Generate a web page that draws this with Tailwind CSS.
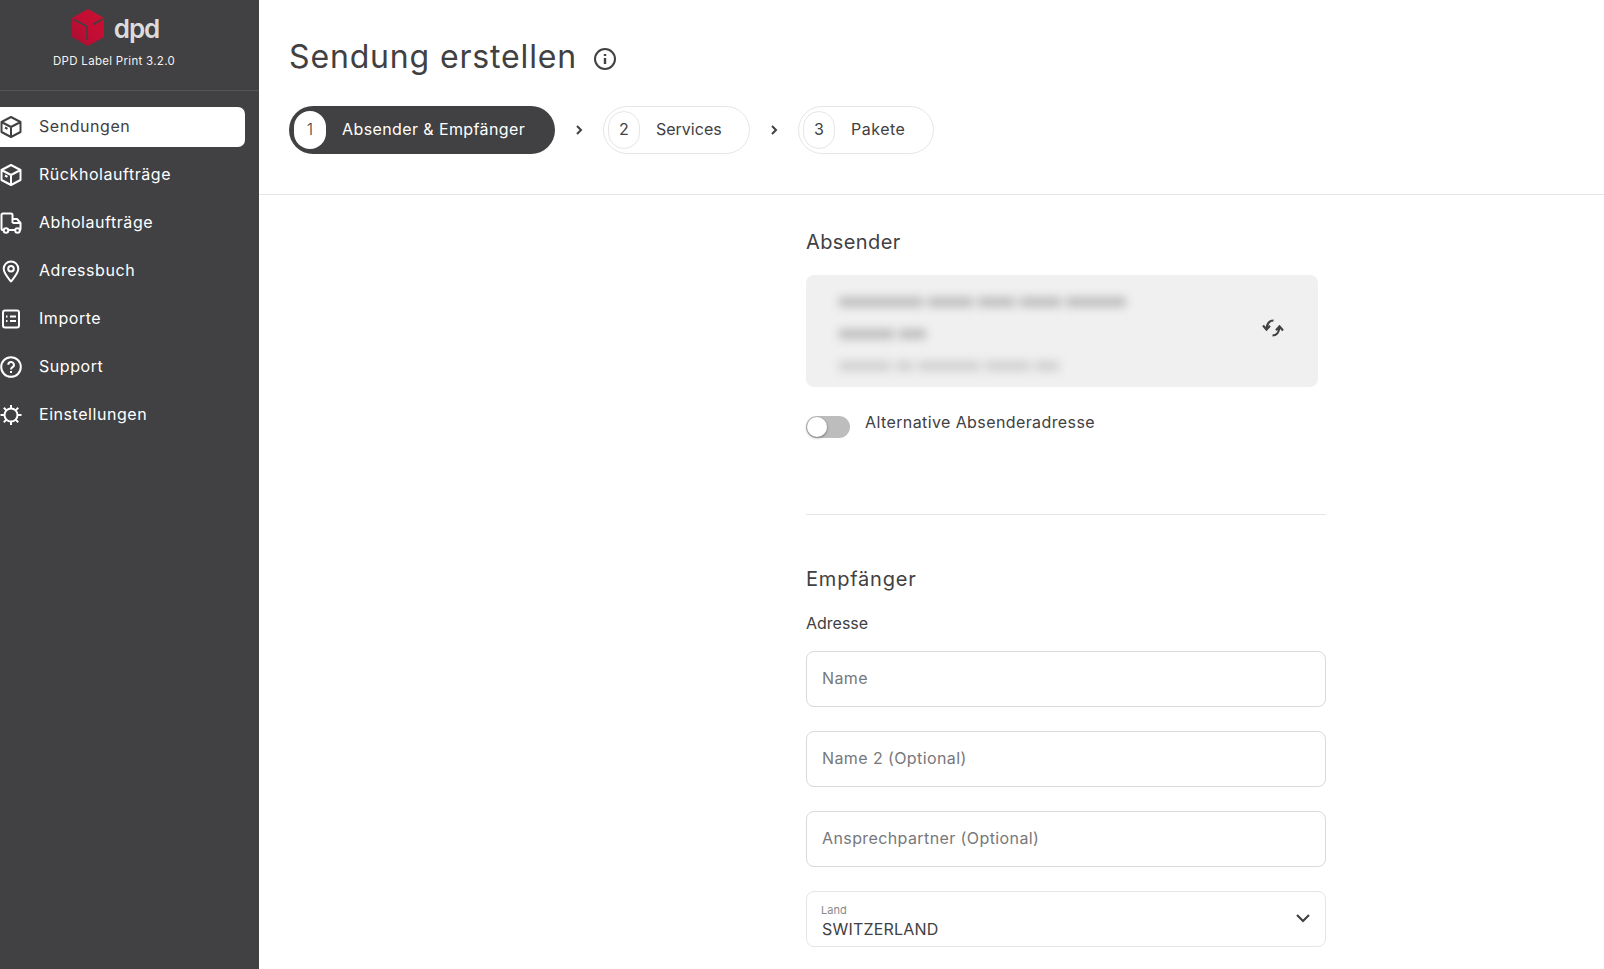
<!DOCTYPE html>
<html lang="de">
<head>
  <meta charset="UTF-8" />
  <title>Sendung erstellen</title>
  <script src="https://cdn.jsdelivr.net/npm/@tailwindcss/browser@4"></script>
</head>
<body class="h-screen overflow-hidden bg-white text-[#414042] font-['Inter',sans-serif]">
  <div class="flex h-full">
    <!-- Sidebar -->
    <aside class="w-[259px] shrink-0 bg-[#414042] text-white">
      <div class="h-[91px] border-b border-[#555456] flex flex-col items-center pr-[31px]">
        <div class="flex items-center gap-[10px] mt-[9px] h-[37px] ml-[3px]">
          <svg class="w-[32px] h-[37px]" viewBox="0 0 32 37">
            <defs>
              <linearGradient id="cube" x1="0" y1="1" x2="1" y2="0">
                <stop offset="0" stop-color="#a50f30" />
                <stop offset="0.5" stop-color="#c40d35" />
                <stop offset="1" stop-color="#c8102e" />
              </linearGradient>
            </defs>
            <path d="M16 0 L32 9 V28 L16 37 L0 28 V9 Z" fill="url(#cube)" />
            <path d="M1 10 L15 17.5 V31 M31 10 L21 15.5" fill="none" stroke="#414042" stroke-width="1.6" />
          </svg>
          <span class="text-[26px] leading-none font-semibold text-[#dcdcdc] tracking-[-1px] mt-[2px]">dpd</span>
        </div>
        <p class="text-[11.5px] leading-[16px] mt-[7px] tracking-[0.3px] text-[#f2f2f2]">DPD Label Print 3.2.0</p>
      </div>
      <nav class="flex flex-col gap-2 pt-4 pr-[14px] text-[16px] tracking-[0.55px]">
        <a class="flex items-center h-10 gap-[17px] bg-white text-[#414042] rounded-r-[7px]">
          <svg class="w-[22px] h-[24px]" viewBox="0 0 22 24" fill="none" stroke="currentColor" stroke-width="2" stroke-linejoin="round"><path d="M11 2 L20.500 7 V17 L11 22 L1.500 17 V7 Z M1.500 7 L11 12 L20.500 7 M11 12 V22" /><path d="M5 12.500 L7.500 13.800" /></svg>
          <span class="mb-[2px]">Sendungen</span>
        </a>
        <a class="flex items-center h-10 gap-[17px]">
          <svg class="w-[22px] h-[24px]" viewBox="0 0 22 24" fill="none" stroke="currentColor" stroke-width="2" stroke-linejoin="round"><path d="M11 2 L20.500 7 V17 L11 22 L1.500 17 V7 Z M1.500 7 L11 12 L20.500 7 M11 12 V22" /><path d="M5 12.500 L7.500 13.800" /></svg>
          <span class="mb-[2px]">Rückholaufträge</span>
        </a>
        <a class="flex items-center h-10 gap-[17px]">
          <svg class="w-[22px] h-[24px]" viewBox="0 0 22 24" fill="none" stroke="currentColor" stroke-width="2" stroke-linejoin="round"><path d="M3.500 19 H2.500 Q1.500 19 1.500 18 V4 Q1.500 2.500 3 2.500 H11 Q12.500 2.500 12.500 4 V12 M12.500 8 H17 L20.500 12 V18 Q20.500 19 19.800 19 M15 19 H8.500 M12.500 12 H20.500" /><circle cx="6" cy="19.500" r="2.300" /><circle cx="17.500" cy="19.500" r="2.300" /></svg>
          <span class="mb-[2px]">Abholaufträge</span>
        </a>
        <a class="flex items-center h-10 gap-[17px]">
          <svg class="w-[22px] h-[24px]" viewBox="0 0 22 24" fill="none" stroke="currentColor" stroke-width="2" stroke-linejoin="round"><path d="M11 22.500 C7 17.500 3.700 14 3.700 9.800 A7.300 7.300 0 0 1 18.300 9.800 C18.300 14 15 17.500 11 22.500 Z" /><circle cx="11" cy="9.800" r="2.800" /></svg>
          <span class="mb-[2px]">Adressbuch</span>
        </a>
        <a class="flex items-center h-10 gap-[17px]">
          <svg class="w-[22px] h-[24px]" viewBox="0 0 22 24" fill="none" stroke="currentColor" stroke-width="2" stroke-linejoin="round"><rect x="3" y="3.500" width="16" height="17" rx="2" /><path d="M10 9.500 H16 M10 14 H16 M6 9.500 H7.500 M6 14 H7.500" /></svg>
          <span class="mb-[2px]">Importe</span>
        </a>
        <a class="flex items-center h-10 gap-[17px]">
          <svg class="w-[22px] h-[24px]" viewBox="0 0 22 24" fill="none" stroke="currentColor" stroke-width="2"><circle cx="11" cy="12" r="9.800" /><path d="M8.300 9.800 A2.800 2.800 0 1 1 12.500 12.200 C11.400 12.900 11 13.400 11 14.600" /><path d="M11 16 V18" /></svg>
          <span class="mb-[2px]">Support</span>
        </a>
        <a class="flex items-center h-10 gap-[17px]">
          <svg class="w-[22px] h-[24px]" viewBox="0 0 22 24" fill="none" stroke="currentColor" stroke-width="2"><circle cx="11" cy="12" r="6.500" /><path d="M11 2 V5.500 M11 18.500 V22 M0.500 12 H4.500 M17.500 12 H21.500 M3.800 4.800 L6.400 7.400 M15.600 16.600 L18.200 19.200 M18.200 4.800 L15.600 7.400 M6.400 16.600 L3.800 19.200" /></svg>
          <span class="mb-[2px]">Einstellungen</span>
        </a>
      </nav>
    </aside>

    <main class="flex-1 min-w-0">
      <!-- Header -->
      <header class="h-[195px] border-b border-[#e6e6e6] pl-[30px] pt-[35px]">
        <div class="flex items-center gap-[16px] h-[46px]">
          <h1 class="text-[32px] leading-none font-normal tracking-[0.85px] mb-[2px]">Sendung erstellen</h1>
          <svg class="w-[24px] h-[24px] mt-[1px]" viewBox="0 0 24 24" fill="none" stroke="currentColor" stroke-width="2"><circle cx="12" cy="12" r="10" /><path d="M12 11 V17" stroke-width="2.400" /><path d="M12 7 V9" stroke-width="2.400" /></svg>
        </div>
        <ol class="flex items-center mt-[25px] text-[16px]">
          <li class="flex items-center h-12 w-[266px] rounded-full bg-[#414042] text-white pl-[5px]">
            <span class="flex items-center justify-center w-[32px] h-[38px] rounded-full bg-white text-[#414042] font-light pb-[2px]">1</span>
            <span class="ml-[16px] mb-[2px] tracking-[0.4px]">Absender &amp; Empfänger</span>
          </li>
          <li class="flex justify-center w-[48px]">
            <svg class="w-[10px] h-[12px]" viewBox="0 0 10 12" fill="none" stroke="currentColor" stroke-width="2"><path d="M3 2 L7 6 L3 10" /></svg>
          </li>
          <li class="flex items-center h-12 w-[147px] rounded-full border border-[#e6e6e6] pl-[4px]">
            <span class="flex items-center justify-center w-[32px] h-[38px] rounded-full border border-[#e6e6e6] pb-[2px]">2</span>
            <span class="ml-[16px] mb-[2px]">Services</span>
          </li>
          <li class="flex justify-center w-[48px]">
            <svg class="w-[10px] h-[12px]" viewBox="0 0 10 12" fill="none" stroke="currentColor" stroke-width="2"><path d="M3 2 L7 6 L3 10" /></svg>
          </li>
          <li class="flex items-center h-12 w-[136px] rounded-full border border-[#e6e6e6] pl-[4px]">
            <span class="flex items-center justify-center w-[32px] h-[38px] rounded-full border border-[#e6e6e6] pb-[2px]">3</span>
            <span class="ml-[16px] mb-[2px] tracking-[0.5px]">Pakete</span>
          </li>
        </ol>
      </header>

      <!-- Form -->
      <section class="w-[520px] ml-[547px]">
        <h2 class="text-[20px] leading-[28px] mt-[33px] tracking-[0.4px]">Absender</h2>
        <div class="flex items-center justify-between h-[112px] w-[512px] mt-[19px] rounded-[8px] bg-[#f0f0f0] pl-[33px] pr-[33px]">
          <div class="flex flex-col gap-[22px] mt-[6px] blur-[5px]">
            <div class="flex gap-[5px]"><i class="w-[84px] h-[10px] bg-[#bdbdbd]"></i><i class="w-[45px] h-[10px] bg-[#bdbdbd]"></i><i class="w-[37px] h-[10px] bg-[#bdbdbd]"></i><i class="w-[41px] h-[10px] bg-[#bdbdbd]"></i><i class="w-[60px] h-[10px] bg-[#bdbdbd]"></i></div>
            <div class="flex gap-[5px]"><i class="w-[55px] h-[10px] bg-[#bdbdbd]"></i><i class="w-[27px] h-[10px] bg-[#bdbdbd]"></i></div>
            <div class="flex gap-[5px]"><i class="w-[52px] h-[10px] bg-[#d0d0d0]"></i><i class="w-[17px] h-[10px] bg-[#d0d0d0]"></i><i class="w-[62px] h-[10px] bg-[#d0d0d0]"></i><i class="w-[45px] h-[10px] bg-[#d0d0d0]"></i><i class="w-[24px] h-[10px] bg-[#d0d0d0]"></i></div>
          </div>
          <svg class="w-[24px] h-[24px] mb-[6px]" viewBox="0 0 24 24" fill="none" stroke="#414042" stroke-width="2.200"><path d="M12.500 4.500 C8.500 4.500 6.200 6.800 5.600 12.500" /><path d="M2 9.500 L5.500 13.500 L9 9.800" /><path d="M11.500 19.500 C15.500 19.500 17.800 17.200 18.400 11.500" /><path d="M15 14.200 L18.500 10.500 L22 14.500" /></svg>
        </div>
        <div class="flex items-start mt-[29px]">
          <span class="relative block w-[44px] h-[22px] rounded-full bg-[#bdbdbd]">
            <span class="absolute left-[1px] top-[1px] w-[20px] h-[20px] rounded-full bg-white shadow-[0_1px_3px_rgba(0,0,0,0.4)]"></span>
          </span>
          <label class="ml-[15px] mt-[-2px] text-[16px] leading-[16px] tracking-[0.4px]">Alternative Absenderadresse</label>
        </div>
        <hr class="border-[#e6e6e6] mt-[76px]" />
        <h2 class="text-[20px] leading-[28px] mt-[50px] tracking-[0.8px]">Empfänger</h2>
        <p class="text-[16px] leading-[24px] mt-[18px]">Adresse</p>
        <div class="flex flex-col gap-[24px] mt-[16px]">
          <input class="h-[56px] w-full rounded-[8px] border border-[#d9d9d9] pl-[15px] pr-4 pb-[2px] text-[16px] tracking-[0.4px] placeholder:text-[#77787b] outline-none" placeholder="Name" />
          <input class="h-[56px] w-full rounded-[8px] border border-[#d9d9d9] pl-[15px] pr-4 pb-[2px] text-[16px] tracking-[0.4px] placeholder:text-[#77787b] outline-none" placeholder="Name 2 (Optional)" />
          <input class="h-[56px] w-full rounded-[8px] border border-[#d9d9d9] pl-[15px] pr-4 pb-[2px] text-[16px] tracking-[0.4px] placeholder:text-[#77787b] outline-none" placeholder="Ansprechpartner (Optional)" />
          <div class="relative h-[56px] w-full rounded-[8px] border border-[#e6e6e6] pl-[15px] pr-4 pt-[11px]">
            <p class="text-[11px] leading-[14px] text-[#8a8a8d] ml-[-1px]">Land</p>
            <p class="text-[16px] leading-[20px] mt-[2px] tracking-[0.2px]">SWITZERLAND</p>
            <svg class="absolute right-[14px] top-[18px] w-[16px] h-[16px]" viewBox="0 0 16 16" fill="none" stroke="#414042" stroke-width="2.200"><path d="M2 5 L8 11 L14 5" /></svg>
          </div>
        </div>
      </section>
    </main>
  </div>
</body>
</html>
